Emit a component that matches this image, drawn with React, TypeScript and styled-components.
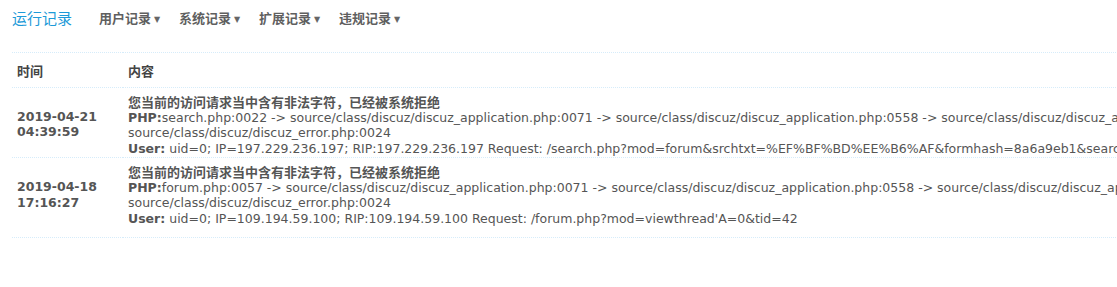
import styled, { createGlobalStyle } from 'styled-components'

interface ILog {
  id: number,
  date: string,
  time: string,
  message: string,
  trace: string[],
  user: string
}

const logs: ILog[] = [
  {
    id: 1,
    date: '2019-04-21',
    time: '04:39:59',
    message: '您当前的访问请求当中含有非法字符，已经被系统拒绝',
    trace: [
      'search.php:0022 -> source/class/discuz/discuz_application.php:0071 -> source/class/discuz/discuz_application.php:0558 -> source/class/discuz/discuz_application.php:0638 ->',
      'source/class/discuz/discuz_error.php:0024'
    ],
    user: 'uid=0; IP=197.229.236.197; RIP:197.229.236.197 Request: /search.php?mod=forum&srchtxt=%EF%BF%BD%EE%B6%AF&formhash=8a6a9eb1&searchsubmit=yes'
  },
  {
    id: 2,
    date: '2019-04-18',
    time: '17:16:27',
    message: '您当前的访问请求当中含有非法字符，已经被系统拒绝',
    trace: [
      'forum.php:0057 -> source/class/discuz/discuz_application.php:0071 -> source/class/discuz/discuz_application.php:0558 -> source/class/discuz/discuz_application.php:0638 ->',
      'source/class/discuz/discuz_error.php:0024'
    ],
    user: "uid=0; IP=109.194.59.100; RIP:109.194.59.100 Request: /forum.php?mod=viewthread'A=0&tid=42"
  }
]

const menus = ['用户记录', '系统记录', '扩展记录', '违规记录']

function App() {
  return (
    <Page>
      <GlobalStyle />
      <Header>
        <Title>运行记录</Title>
        <Nav>
          {menus.map(m => (
            <NavItem key={m}>
              {m}
              <Arrow>▼</Arrow>
            </NavItem>
          ))}
        </Nav>
      </Header>
      <Table>
        <thead>
          <tr>
            <Th $time>时间</Th>
            <Th>内容</Th>
          </tr>
        </thead>
        <tbody>
          {logs.map((item, i) => {
            const last = i === logs.length - 1
            return <tr key={item.id}>
              <TimeCell $last={last}>
                {item.date}
                <br />
                {item.time}
              </TimeCell>
              <ContentCell $last={last}>
                <Line><Message>{item.message}</Message></Line>
                <Line><Label>PHP:</Label>{item.trace[0]}</Line>
                <Line>{item.trace[1]}</Line>
                <Line><Label>User:</Label> {item.user}</Line>
              </ContentCell>
            </tr>
          })}
        </tbody>
      </Table>
    </Page>
  )
}

const GlobalStyle = createGlobalStyle`
  html, body {
    margin: 0;
    padding: 0;
    background: #fff;
    overflow: hidden;
  }
  body {
    font: 12.5px "DejaVu Sans", "Noto Sans CJK SC", sans-serif;
    color: #555;
  }
`

const Page = styled.div`
  padding: 0 0 0 12px;
  width: 1700px;
`

const Header = styled.div`
  height: 52px;
  display: flex;
  align-items: flex-start;
  padding-top: 9px;
  box-sizing: border-box;
`

const Title = styled.h3`
  margin: 0;
  font-size: 15px;
  font-weight: normal;
  line-height: 18px;
  color: #1d9ad8;
  font-family: "Noto Sans CJK SC", sans-serif;
  width: 87px;
`

const Nav = styled.ul`
  display: flex;
  margin: 0;
  padding: 0;
  list-style: none;
`

const NavItem = styled.li`
  width: 80px;
  font-weight: bold;
  font-size: 13px;
  line-height: 18px;
  color: #5f5f5f;
  font-family: "Noto Sans CJK SC", sans-serif;
`

const Arrow = styled.span`
  font-size: 8px;
  margin-left: 3px;
  color: #666;
  vertical-align: 1px;
  font-family: "DejaVu Sans", sans-serif;
`

const Table = styled.table`
  border-collapse: collapse;
  width: 1700px;
  border-top: 1px dotted #d6ecfa;
`

const Th = styled.th<{ $time?: boolean }>`
  text-align: left;
  font-weight: bold;
  font-size: 13px;
  color: #444;
  height: 33px;
  padding: 1px 5px 0;
  width: ${props => (props.$time ? '101px' : 'auto')};
  border-bottom: 1px dotted #d6ecfa;
  font-family: "Noto Sans CJK SC", sans-serif;
`

const TimeCell = styled.td<{ $last?: boolean }>`
  padding: ${props => (props.$last ? '3px 5px 9px' : '3px 5px 0')};
  font-weight: bold;
  font-size: 12.5px;
  line-height: 15.5px;
  vertical-align: middle;
  color: #555;
  border-bottom: 1px dotted #d6ecfa;
  white-space: nowrap;
`

const ContentCell = styled.td<{ $last?: boolean }>`
  box-sizing: border-box;
  height: ${props => (props.$last ? '80px' : '70px')};
  padding: 6px 5px 0;
  white-space: nowrap;
  vertical-align: top;
  border-bottom: 1px dotted #d6ecfa;
`

const Line = styled.div`
  height: 15.6px;
  line-height: 15.6px;
`

const Message = styled.b`
  color: #555;
  font-size: 13px;
  font-family: "Noto Sans CJK SC", sans-serif;
`

const Label = styled.b`
  color: #555;
`

export default App
